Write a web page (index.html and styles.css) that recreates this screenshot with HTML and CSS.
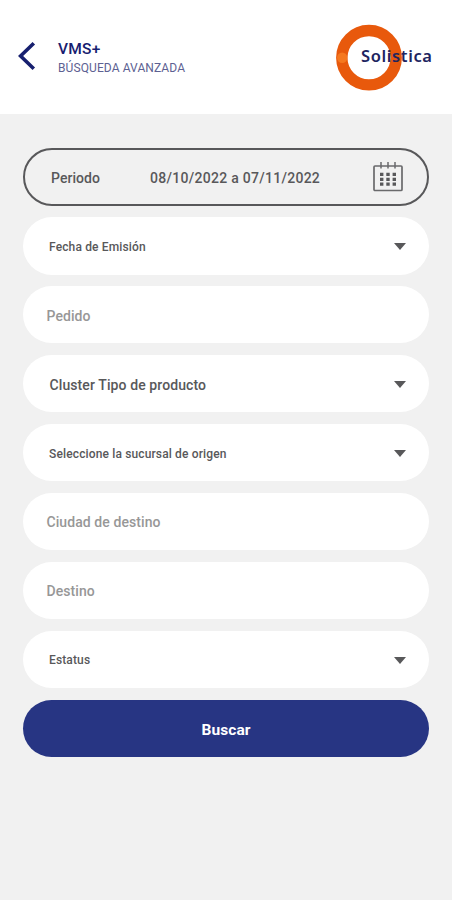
FILE: index.html
```html
<!DOCTYPE html>
<html lang="es">
<head>
<meta charset="utf-8">
<meta name="viewport" content="width=device-width, initial-scale=1">
<title>VMS+ Búsqueda avanzada</title>
<link rel="stylesheet" href="styles.css">
</head>
<body>
<header class="header">
  <svg class="back" width="18" height="30" viewBox="0 0 18 30" aria-hidden="true"><path d="M15.8 2.2 2.6 15 15.8 27.8"/></svg>
  <div class="titles">
    <h1 class="title">VMS+</h1>
    <p class="subtitle">BÚSQUEDA AVANZADA</p>
  </div>
  <svg class="logo" width="98" height="68" viewBox="0 0 98 68">
    <circle class="logo-ring" cx="34" cy="33.7" r="27.2"/>
    <circle class="logo-dot" cx="7.2" cy="33.7" r="5.2"/>
    <text class="logo-text" x="26" y="38" textLength="71" lengthAdjust="spacing">Solistica</text>
  </svg>
</header>
<main class="form">
  <div class="field period">
    <span class="period-label">Periodo</span>
    <span class="period-range">08/10/2022 a 07/11/2022</span>
    <svg class="calendar" width="30" height="32" viewBox="0 0 30 32" aria-hidden="true">
      <rect class="cal-frame" x="1" y="5" width="28" height="24.5" rx="1"/>
      <path class="cal-rings" d="M8 1v6.5M15 1v6.5M22 1v6.5"/>
      <path class="cal-days" d="M7 13.4h3.4M13.3 13.4h3.4M19.6 13.4h3.4M7 18.4h3.4M13.3 18.4h3.4M19.6 18.4h3.4M7 23.2h3.4M13.3 23.2h3.4M19.6 23.2h3.4"/>
    </svg>
  </div>
  <div class="field select"><span class="emision">Fecha de Emisión</span><i class="caret"></i></div>
  <div class="field input"><span>Pedido</span></div>
  <div class="field select large"><span>Cluster Tipo de producto</span><i class="caret"></i></div>
  <div class="field select"><span class="sucursal">Seleccione la sucursal de origen</span><i class="caret"></i></div>
  <div class="field input"><span>Ciudad de destino</span></div>
  <div class="field input"><span>Destino</span></div>
  <div class="field select"><span>Estatus</span><i class="caret"></i></div>
  <button class="field submit" type="button">Buscar</button>
</main>
</body>
</html>
```
FILE: styles.css
```css
* { box-sizing: border-box; }
body {
  margin: 0;
  min-height: 900px;
  background: #f1f1f1;
  font-family: Roboto, sans-serif;
  color: #58585a;
}
.header {
  display: flex;
  align-items: flex-start;
  height: 114px;
  padding: 24px 19px 0 18px;
  background: #fff;
}
.back {
  margin-top: 17px;
  fill: none;
  stroke: #17206f;
  stroke-width: 3.6;
}
.titles { margin: 15px 0 0 22px; }
.title {
  margin: 0;
  font-size: 15.5px;
  font-weight: 500;
  line-height: 20px;
  letter-spacing: .25px;
  color: #17206f;
}
.subtitle {
  margin: 0;
  font-size: 12px;
  line-height: 18px;
  letter-spacing: .1px;
  color: #5d6192;
}
.logo { margin-left: auto; overflow: visible; }
.logo-ring { fill: none; stroke: #e8590c; stroke-width: 11.4; }
.logo-dot { fill: #f5781f; }
.logo-text {
  font: 600 16.5px "Noto Sans", sans-serif;
  fill: #20245f;
}
.form {
  display: flex;
  flex-direction: column;
  gap: 11.6px;
  padding: 34.4px 23px 0;
}
.field {
  display: flex;
  align-items: center;
  height: 57.3px;
  border-radius: 29px;
  background: #fff;
  font-weight: 500;
}
.field span { padding-top: 2px; }
.period {
  padding: 0 24px 0 26px;
  border: 2px solid #58585a;
  background: transparent;
  font-size: 14px;
}
.period-label { width: 99px; letter-spacing: .05px; }
.period-range { letter-spacing: .28px; }
.calendar { margin-left: auto; fill: none; stroke: #6a6a6c; }
.cal-frame { stroke-width: 1.7; }
.cal-rings { stroke-width: 1.5; }
.cal-days { stroke: #58585a; stroke-width: 3.2; }
.select {
  justify-content: space-between;
  padding: 0 23px 0 26px;
  font-size: 12px;
  letter-spacing: .14px;
}
.large {
  padding-left: 26.5px;
  font-size: 14px;
  letter-spacing: .1px;
}
.caret {
  margin-top: 2px;
  border: 6.5px solid transparent;
  border-top: 7px solid #58585a;
  border-bottom: 0;
}
.input {
  padding-left: 23.5px;
  font-size: 14px;
  letter-spacing: .08px;
  color: #979797;
}
.submit {
  justify-content: center;
  padding: 3px 0 0;
  border: 0;
  background: #273583;
  color: #fff;
  font-family: inherit;
  font-size: 15.5px;
  font-weight: 700;
  letter-spacing: .1px;
}
```
